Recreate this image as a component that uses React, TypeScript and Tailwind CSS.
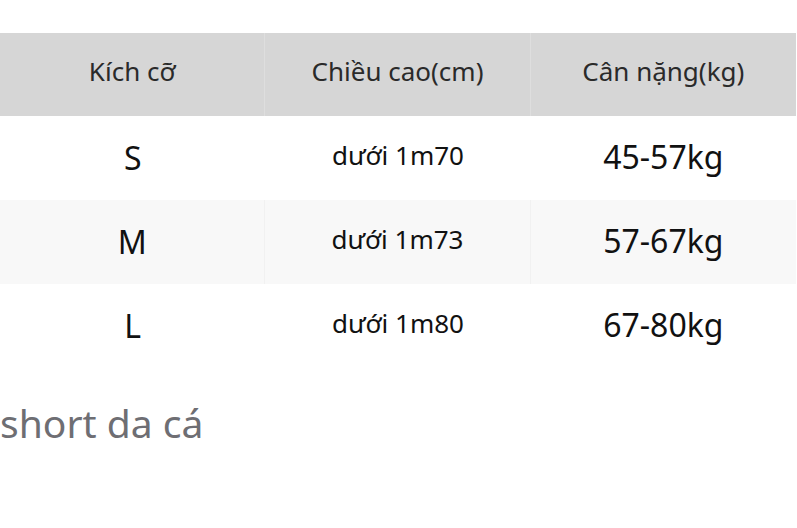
import React from 'react';

const rows = [
  { size: 'S', height: 'dưới 1m70', weight: '45-57kg' },
  { size: 'M', height: 'dưới 1m73', weight: '57-67kg' },
  { size: 'L', height: 'dưới 1m80', weight: '67-80kg' },
];

const App: React.FC = () => {
  return (
    <div className="w-[797px] h-[528px] bg-white overflow-hidden" style={{ fontFamily: '"Noto Sans", "Open Sans", sans-serif' }}>
      <div className="pt-[33px] w-[796px]">
        {/* Bảng size */}
        <div className="grid grid-cols-3 h-[83px] bg-[#d6d6d6] text-[#2a2a2a] text-[26px]">
          <div className="flex items-center justify-center pb-[6px] border-r border-[#dedede]">Kích cỡ</div>
          <div className="flex items-center justify-center pb-[6px] border-r border-[#dedede]">Chiều cao(cm)</div>
          <div className="flex items-center justify-center pb-[6px]">Cân nặng(kg)</div>
        </div>
        {rows.map((r, i) => (
          <div
            key={r.size}
            className={`grid grid-cols-3 h-[84px] text-[#111] ${i === 1 ? 'bg-[#f8f8f8]' : 'bg-white'}`}
          >
            <div className={`flex items-center justify-center text-[32px] ${i === 1 ? 'border-r border-[#f1f1f1]' : ''}`}>{r.size}</div>
            <div className={`flex items-center justify-center text-[26px] pb-[6px] ${i === 1 ? 'border-r border-[#f1f1f1]' : ''}`}>{r.height}</div>
            <div className="flex items-center justify-center text-[32px] pb-[2px]">{r.weight}</div>
          </div>
        ))}
      </div>
      <div className="pt-[28px] text-[39px] leading-[54px] text-[#6e6e73]">short da cá</div>
    </div>
  );
};

export default App;
